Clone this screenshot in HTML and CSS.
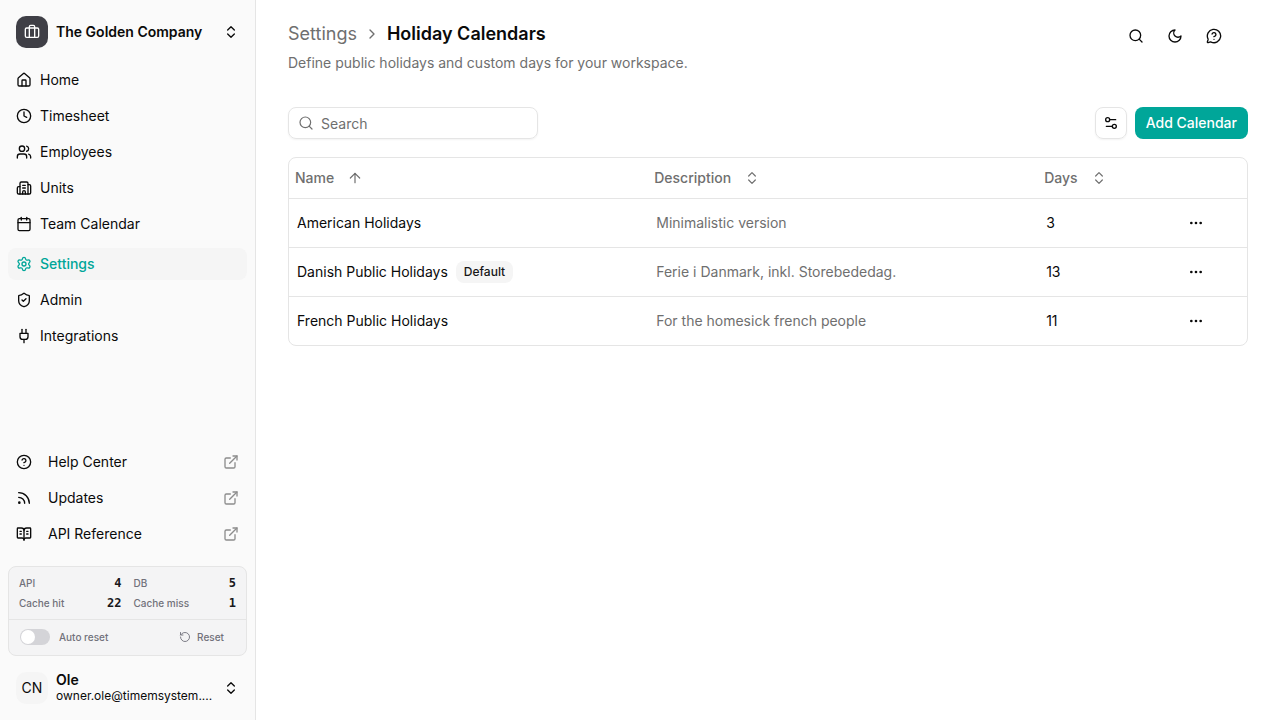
FILE: index.html
```html
<!DOCTYPE html>
<html lang="en">
<head>
<meta charset="utf-8">
<meta name="viewport" content="width=device-width, initial-scale=1">
<title>Holiday Calendars</title>
<link rel="stylesheet" href="styles.css">
</head>
<body>
<svg class="sprite" aria-hidden="true">
  <symbol id="briefcase" viewBox="0 0 24 24"><path d="M16 20V4a2 2 0 0 0-2-2h-4a2 2 0 0 0-2 2v16"/><rect width="20" height="14" x="2" y="6" rx="2"/></symbol>
  <symbol id="chevrons" viewBox="0 0 24 24"><path d="m7 15 5 5 5-5"/><path d="m7 9 5-5 5 5"/></symbol>
  <symbol id="chevron-right" viewBox="0 0 24 24"><path d="m9 18 6-6-6-6"/></symbol>
  <symbol id="home" viewBox="0 0 24 24"><path d="M15 21v-8a1 1 0 0 0-1-1h-4a1 1 0 0 0-1 1v8"/><path d="M3 10a2 2 0 0 1 .709-1.528l7-5.999a2 2 0 0 1 2.582 0l7 5.999A2 2 0 0 1 21 10v9a2 2 0 0 1-2 2H5a2 2 0 0 1-2-2z"/></symbol>
  <symbol id="clock" viewBox="0 0 24 24"><circle cx="12" cy="12" r="10"/><path d="M12 6v6l4 2"/></symbol>
  <symbol id="users" viewBox="0 0 24 24"><path d="M16 21v-2a4 4 0 0 0-4-4H6a4 4 0 0 0-4 4v2"/><circle cx="9" cy="7" r="4"/><path d="M22 21v-2a4 4 0 0 0-3-3.870"/><path d="M16 3.130a4 4 0 0 1 0 7.750"/></symbol>
  <symbol id="building" viewBox="0 0 24 24"><path d="M10 12h4"/><path d="M10 8h4"/><path d="M14 21v-3a2 2 0 0 0-4 0v3"/><path d="M6 10H4a2 2 0 0 0-2 2v7a2 2 0 0 0 2 2h16a2 2 0 0 0 2-2V9a2 2 0 0 0-2-2h-2"/><path d="M6 21V5a2 2 0 0 1 2-2h8a2 2 0 0 1 2 2v16"/></symbol>
  <symbol id="calendar" viewBox="0 0 24 24"><path d="M8 2v4"/><path d="M16 2v4"/><rect width="18" height="18" x="3" y="4" rx="2"/><path d="M3 10h18"/></symbol>
  <symbol id="settings" viewBox="0 0 24 24"><path d="M9.671 4.136a2.34 2.34 0 0 1 4.659 0 2.34 2.34 0 0 0 3.319 1.915 2.34 2.34 0 0 1 2.33 4.033 2.34 2.34 0 0 0 0 3.831 2.34 2.34 0 0 1-2.33 4.033 2.34 2.34 0 0 0-3.319 1.915 2.34 2.34 0 0 1-4.659 0 2.34 2.34 0 0 0-3.32-1.915 2.34 2.34 0 0 1-2.33-4.033 2.34 2.34 0 0 0 0-3.831A2.34 2.34 0 0 1 6.35 6.051a2.34 2.34 0 0 0 3.319-1.915"/><circle cx="12" cy="12" r="3"/></symbol>
  <symbol id="shield" viewBox="0 0 24 24"><path d="M20 13c0 5-3.5 7.500-7.660 8.950a1 1 0 0 1-.67-.01C7.500 20.500 4 18 4 13V6a1 1 0 0 1 1-1c2 0 4.500-1.200 6.240-2.720a1.170 1.170 0 0 1 1.520 0C14.510 3.810 17 5 19 5a1 1 0 0 1 1 1z"/><path d="m9 12 2 2 4-4"/></symbol>
  <symbol id="plug" viewBox="0 0 24 24"><path d="M12 22v-5"/><path d="M9 8V2"/><path d="M15 8V2"/><path d="M18 8v5a4 4 0 0 1-4 4h-4a4 4 0 0 1-4-4V8Z"/></symbol>
  <symbol id="help" viewBox="0 0 24 24"><circle cx="12" cy="12" r="10"/><path d="M9.090 9a3 3 0 0 1 5.830 1c0 2-3 3-3 3"/><path d="M12 17h.01"/></symbol>
  <symbol id="rss" viewBox="0 0 24 24"><path d="M4 11a9 9 0 0 1 9 9"/><path d="M4 4a16 16 0 0 1 16 16"/><circle cx="5" cy="19" r="1"/></symbol>
  <symbol id="book" viewBox="0 0 24 24"><path d="M12 7v14"/><path d="M16 12h2"/><path d="M16 8h2"/><path d="M3 18a1 1 0 0 1-1-1V4a1 1 0 0 1 1-1h5a4 4 0 0 1 4 4 4 4 0 0 1 4-4h5a1 1 0 0 1 1 1v13a1 1 0 0 1-1 1h-6a3 3 0 0 0-3 3 3 3 0 0 0-3-3z"/><path d="M6 12h2"/><path d="M6 8h2"/></symbol>
  <symbol id="external" viewBox="0 0 24 24"><path d="M15 3h6v6"/><path d="M10 14 21 3"/><path d="M18 13v6a2 2 0 0 1-2 2H5a2 2 0 0 1-2-2V8a2 2 0 0 1 2-2h6"/></symbol>
  <symbol id="reset" viewBox="0 0 24 24"><path d="M3 12a9 9 0 1 0 9-9 9.750 9.750 0 0 0-6.740 2.740L3 8"/><path d="M3 3v5h5"/></symbol>
  <symbol id="search" viewBox="0 0 24 24"><circle cx="11" cy="11" r="8"/><path d="m21 21-4.300-4.300"/></symbol>
  <symbol id="moon" viewBox="0 0 24 24"><path d="M12 3a6 6 0 0 0 9 9 9 9 0 1 1-9-9Z"/></symbol>
  <symbol id="message-help" viewBox="0 0 24 24"><path d="M2.992 16.342a2 2 0 0 1 .094 1.167l-1.065 3.290a1 1 0 0 0 1.236 1.168l3.413-.998a2 2 0 0 1 1.099.092 10 10 0 1 0-4.777-4.719"/><path d="M9.090 9a3 3 0 0 1 5.830 1c0 2-3 3-3 3"/><path d="M12 17h.01"/></symbol>
  <symbol id="sliders" viewBox="0 0 24 24"><path d="M14 17H5"/><path d="M19 7h-9"/><circle cx="17" cy="17" r="3"/><circle cx="7" cy="7" r="3"/></symbol>
  <symbol id="arrow-up" viewBox="0 0 24 24"><path d="m5 12 7-7 7 7"/><path d="M12 19V5"/></symbol>
  <symbol id="dots" viewBox="0 0 24 24"><circle cx="12" cy="12" r="1"/><circle cx="19" cy="12" r="1"/><circle cx="5" cy="12" r="1"/></symbol>
</svg>

<div class="app">
  <aside class="sidebar">
    <button class="account" type="button">
      <span class="logo"><svg class="icon"><use href="#briefcase"/></svg></span>
      <span class="account-name">The Golden Company</span>
      <svg class="icon"><use href="#chevrons"/></svg>
    </button>

    <nav class="nav" aria-label="Main">
      <div class="nav-group">
        <a class="nav-item" href="#"><svg class="icon"><use href="#home"/></svg>Home</a>
        <a class="nav-item" href="#"><svg class="icon"><use href="#clock"/></svg>Timesheet</a>
        <a class="nav-item" href="#"><svg class="icon"><use href="#users"/></svg>Employees</a>
        <a class="nav-item" href="#"><svg class="icon"><use href="#building"/></svg>Units</a>
        <a class="nav-item" href="#"><svg class="icon"><use href="#calendar"/></svg>Team Calendar</a>
      </div>
      <div class="nav-group">
        <a class="nav-item active" href="#" aria-current="page"><svg class="icon"><use href="#settings"/></svg>Settings</a>
        <a class="nav-item" href="#"><svg class="icon"><use href="#shield"/></svg>Admin</a>
        <a class="nav-item" href="#"><svg class="icon"><use href="#plug"/></svg>Integrations</a>
      </div>
    </nav>

    <nav class="nav-group" aria-label="Resources">
      <a class="nav-item wide" href="#"><svg class="icon"><use href="#help"/></svg><span class="grow">Help Center</span><svg class="icon faint"><use href="#external"/></svg></a>
      <a class="nav-item wide" href="#"><svg class="icon"><use href="#rss"/></svg><span class="grow">Updates</span><svg class="icon faint"><use href="#external"/></svg></a>
      <a class="nav-item wide" href="#"><svg class="icon"><use href="#book"/></svg><span class="grow">API Reference</span><svg class="icon faint"><use href="#external"/></svg></a>
    </nav>

    <section class="stats" aria-label="Request statistics">
      <dl class="counts">
        <div class="count"><dt>API</dt><dd>4</dd></div>
        <div class="count"><dt>DB</dt><dd>5</dd></div>
        <div class="count"><dt>Cache hit</dt><dd>22</dd></div>
        <div class="count"><dt>Cache miss</dt><dd>1</dd></div>
      </dl>
      <div class="stats-actions">
        <label class="switch-label"><input class="switch" type="checkbox" role="switch">Auto reset</label>
        <button class="reset" type="button"><svg class="icon small"><use href="#reset"/></svg>Reset</button>
      </div>
    </section>

    <button class="account" type="button">
      <span class="avatar">CN</span>
      <span class="user">
        <span class="user-name">Ole</span>
        <span class="user-mail">owner.ole@timemsystem....</span>
      </span>
      <svg class="icon"><use href="#chevrons"/></svg>
    </button>
  </aside>

  <main class="main">
    <header class="page-header">
      <div>
        <div class="breadcrumb">
          <a class="crumb" href="#">Settings</a>
          <svg class="icon"><use href="#chevron-right"/></svg>
          <h1 class="title">Holiday Calendars</h1>
        </div>
        <p class="subtitle">Define public holidays and custom days for your workspace.</p>
      </div>
      <div class="header-actions">
        <button class="icon-button" type="button" aria-label="Search"><svg class="icon"><use href="#search"/></svg></button>
        <button class="icon-button" type="button" aria-label="Toggle theme"><svg class="icon"><use href="#moon"/></svg></button>
        <button class="icon-button" type="button" aria-label="Get help"><svg class="icon"><use href="#message-help"/></svg></button>
      </div>
    </header>

    <div class="toolbar">
      <label class="search">
        <svg class="icon thin"><use href="#search"/></svg>
        <input class="search-input" type="search" placeholder="Search" aria-label="Search calendars">
      </label>
      <button class="view-button" type="button" aria-label="View options"><svg class="icon"><use href="#sliders"/></svg></button>
      <button class="primary" type="button">Add Calendar</button>
    </div>

    <div class="table-frame">
      <table class="table">
        <colgroup><col class="col-name"><col class="col-description"><col class="col-days"><col></colgroup>
        <thead>
          <tr>
            <th scope="col" aria-sort="ascending"><button class="sort" type="button">Name<svg class="icon thin"><use href="#arrow-up"/></svg></button></th>
            <th scope="col"><button class="sort" type="button">Description<svg class="icon thin"><use href="#chevrons"/></svg></button></th>
            <th scope="col"><button class="sort" type="button">Days<svg class="icon thin"><use href="#chevrons"/></svg></button></th>
            <th scope="col" aria-label="Actions"></th>
          </tr>
        </thead>
        <tbody>
          <tr>
            <td>American Holidays</td>
            <td class="muted">Minimalistic version</td>
            <td>3</td>
            <td><button class="icon-button" type="button" aria-label="Actions"><svg class="icon"><use href="#dots"/></svg></button></td>
          </tr>
          <tr>
            <td><span class="name">Danish Public Holidays<span class="badge">Default</span></span></td>
            <td class="muted">Ferie i Danmark, inkl. Storebededag.</td>
            <td>13</td>
            <td><button class="icon-button" type="button" aria-label="Actions"><svg class="icon"><use href="#dots"/></svg></button></td>
          </tr>
          <tr>
            <td>French Public Holidays</td>
            <td class="muted">For the homesick french people</td>
            <td>11</td>
            <td><button class="icon-button" type="button" aria-label="Actions"><svg class="icon"><use href="#dots"/></svg></button></td>
          </tr>
        </tbody>
      </table>
    </div>
  </main>
</div>
</body>
</html>
```
FILE: styles.css
```css
:root {
  --text: #0a0a0a;
  --muted: #6f6f6f;
  --line: #e5e5e5;
  --soft: #f5f5f5;
  --accent: #00a699;
}

* { box-sizing: border-box; }

body {
  margin: 0;
  font: 14px/20px Inter, "Liberation Sans", sans-serif;
  color: var(--text);
  background: #fff;
}

button, input { font: inherit; color: inherit; }
button { padding: 0; border: 0; background: none; cursor: pointer; }
a { color: inherit; text-decoration: none; }

.sprite { display: none; }

.icon {
  flex: none;
  width: 16px;
  height: 16px;
  fill: none;
  stroke: currentColor;
  stroke-width: 2;
  stroke-linecap: round;
  stroke-linejoin: round;
}
.icon.thin { stroke-width: 1.8; }
.icon.small { width: 12px; height: 12px; stroke-width: 1.8; }
.icon.faint { opacity: 0.45; }

.app { display: flex; min-height: 100vh; }

/* Sidebar */
.sidebar {
  display: flex;
  flex: none;
  flex-direction: column;
  width: 256px;
  padding: 8px;
  background: #fafafa;
  border-right: 1px solid var(--line);
}

.account {
  display: flex;
  align-items: center;
  gap: 8px;
  padding: 8px;
  text-align: left;
}
.logo, .avatar {
  display: flex;
  flex: none;
  align-items: center;
  justify-content: center;
  width: 32px;
  height: 32px;
  border-radius: 10px;
}
.logo { color: #fff; background: #3f3f46; }
.avatar { background: var(--soft); }
.account-name { flex: 1; font-weight: 600; }
.user { display: flex; flex: 1; flex-direction: column; min-width: 0; }
.user-name { font-weight: 600; line-height: 16px; }
.user-mail {
  overflow: hidden;
  font-size: 12px;
  line-height: 16px;
  text-overflow: ellipsis;
  white-space: nowrap;
}

.nav { display: flex; flex: 1; flex-direction: column; gap: 8px; padding-top: 8px; }
.nav-group { display: flex; flex-direction: column; gap: 4px; }
.nav-item {
  display: flex;
  align-items: center;
  gap: 8px;
  height: 32px;
  padding: 0 8px;
  border-radius: 8px;
}
.nav-item.active { font-weight: 500; color: var(--accent); background: var(--soft); }
.nav-item.wide { gap: 16px; }
.grow { flex: 1; }

/* Request counters */
.stats {
  margin: 16px 0 8px;
  font-size: 10px;
  font-weight: 500;
  color: #71717a;
  background: #f4f4f5;
  border: 1px solid var(--line);
  border-radius: 8px;
}
.counts {
  display: grid;
  grid-template-columns: 1fr 1fr;
  gap: 4px 12px;
  margin: 0;
  padding: 8px 10px;
}
.count { display: flex; align-items: center; justify-content: space-between; line-height: 16px; }
.count dd {
  margin: 0;
  font: bold 12px/16px "DejaVu Sans Mono", monospace;
  color: #18181b;
}
.stats-actions {
  display: flex;
  align-items: center;
  justify-content: space-between;
  padding: 5px 22px 6px 11px;
  border-top: 1px solid var(--line);
}
.switch-label { display: flex; align-items: center; gap: 9px; }
.switch {
  display: flex;
  width: 30px;
  height: 16px;
  margin: 0;
  padding: 1px;
  appearance: none;
  background: #d4d4d8;
  border-radius: 8px;
}
.switch::before {
  width: 14px;
  height: 14px;
  content: "";
  background: #fff;
  border-radius: 50%;
}
.switch:checked { justify-content: flex-end; background: var(--accent); }
.reset { display: flex; align-items: center; gap: 6px; height: 24px; }

/* Page */
.main { flex: 1; min-width: 0; padding: 20px 32px; }
.page-header { display: flex; justify-content: space-between; }
.breadcrumb { display: flex; align-items: center; gap: 7px; font-size: 18px; line-height: 28px; color: var(--muted); }
.title { margin: 0; font-size: 18px; font-weight: 600; line-height: 28px; color: var(--text); }
.subtitle { margin: 5px 0 0; color: var(--muted); }
.header-actions { display: flex; gap: 7px; padding-right: 18px; }
.icon-button {
  display: flex;
  align-items: center;
  justify-content: center;
  width: 32px;
  height: 32px;
  border-radius: 8px;
}

.toolbar { display: flex; align-items: center; gap: 8px; margin: 34px 0 18px; }
.search {
  display: flex;
  align-items: center;
  gap: 7px;
  width: 250px;
  height: 32px;
  margin-right: auto;
  padding: 0 9px;
  color: var(--muted);
  border: 1px solid var(--line);
  border-radius: 8px;
  box-shadow: 0 1px 2px rgb(0 0 0 / 5%);
}
.search-input {
  flex: 1;
  min-width: 0;
  padding: 2px 0 0;
  color: var(--text);
  background: none;
  border: 0;
  outline: 0;
}
.search-input::placeholder { color: var(--muted); opacity: 1; }
.view-button {
  display: flex;
  align-items: center;
  justify-content: center;
  width: 32px;
  height: 32px;
  border: 1px solid var(--line);
  border-radius: 8px;
  box-shadow: 0 1px 2px rgb(0 0 0 / 5%);
}
.primary {
  height: 32px;
  padding: 0 11px;
  font-weight: 500;
  color: #fff;
  background: var(--accent);
  border-radius: 8px;
}

/* Calendar table */
.table-frame { border: 1px solid var(--line); border-radius: 8px; }
.table { width: 100%; table-layout: fixed; border-spacing: 0; }
.col-name { width: 37.5%; }
.col-description { width: 40.7%; }
.col-days { width: 14%; }
.table th, .table td { padding: 8px; text-align: left; border-bottom: 1px solid var(--line); }
.table th { height: 41px; padding: 0 6px; font-weight: 500; color: var(--muted); }
.table td { height: 49px; }
.table tbody tr:last-child td { height: 48px; border-bottom: 0; }
.table .muted { color: var(--muted); }
.sort { display: flex; align-items: center; gap: 13px; font-weight: 500; }
.name { display: flex; align-items: center; gap: 8px; }
.badge {
  padding: 3px 8px;
  font-size: 12px;
  font-weight: 500;
  line-height: 16px;
  color: #171717;
  background: var(--soft);
  border-radius: 8px;
}
```
